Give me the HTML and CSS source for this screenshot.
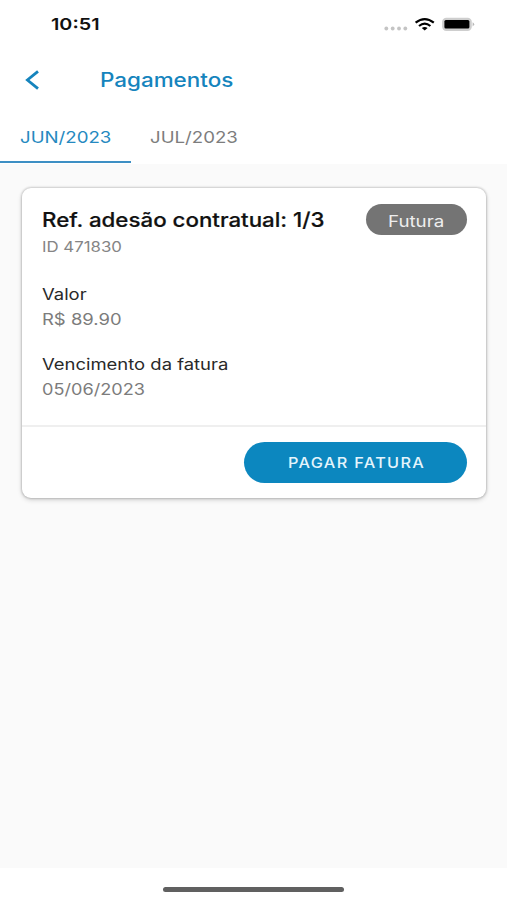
FILE: index.html
```html
<!DOCTYPE html>
<html lang="pt-BR">
<head>
<meta charset="utf-8">
<title>Pagamentos</title>
<link rel="stylesheet" href="styles.css">
</head>
<body>
<div class="screen">
  <div class="status">
    <span class="wide time">10:51</span>
    <svg class="status-icons" width="92" height="16" viewBox="0 0 92 16">
      <g fill="#c4c4c4"><circle cx="3.3" cy="12.5" r="1.9"/><circle cx="9.7" cy="12.5" r="1.9"/><circle cx="16" cy="12.5" r="1.9"/><circle cx="22.3" cy="12.5" r="1.9"/></g>
      <g fill="none" stroke="#000" stroke-width="2.2"><path d="M32.6 6.7Q41.7-.5 50.8 6.7"/><path d="M36 10Q41.7 5.4 47.4 10"/></g>
      <path d="M38.8 12Q41.7 9.8 44.6 12L41.7 14.4Z"/>
      <rect x="59.1" y="1.7" width="29.7" height="13.2" rx="4.2" fill="#cecece"/>
      <rect x="61.4" y="4.1" width="25" height="8.4" rx="1.5"/>
      <path d="M89.6 6.2Q92.8 8.2 89.6 10.4Z" fill="#b8b8b8"/>
    </svg>
  </div>
  <header class="appbar">
    <svg class="back" width="16" height="22" viewBox="0 0 16 22"><path d="M14 2.3L3.4 11l10.6 8.7" fill="none" stroke="#1584bd" stroke-width="2.8"/></svg>
    <h1 class="wide">Pagamentos</h1>
  </header>
  <nav class="tabs">
    <div class="tab active"><span class="wide">JUN/2023</span></div>
    <div class="tab"><span class="wide">JUL/2023</span></div>
  </nav>
  <main>
    <section class="card">
      <div class="details">
        <div class="heading">
          <h2 class="wide">Ref. adesão contratual: 1/3</h2>
          <span class="badge"><span class="wide">Futura</span></span>
        </div>
        <p class="wide id">ID 471830</p>
        <p class="wide label">Valor</p>
        <p class="wide value">R$ 89.90</p>
        <p class="wide label due">Vencimento da fatura</p>
        <p class="wide value date">05/06/2023</p>
      </div>
      <div class="actions"><button type="button"><span class="wide">PAGAR FATURA</span></button></div>
    </section>
  </main>
  <footer><div class="home"></div></footer>
</div>
</body>
</html>
```
FILE: styles.css
```css
* { box-sizing: border-box; margin: 0; padding: 0; }
body { background: #fff; font-family: Inter, "Liberation Sans", sans-serif; color: #222; }
.screen { width: 507px; height: 900px; display: flex; flex-direction: column; overflow: hidden; }
.wide { display: inline-block; transform: scaleX(1.2); transform-origin: left center; white-space: nowrap; }
.status { height: 48px; display: flex; justify-content: space-between; padding: 16px 32px 0 50.5px; }
.time { font-size: 16.5px; font-weight: 600; line-height: 17px; color: #111; }
.appbar { height: 64px; display: flex; align-items: center; padding-left: 24px; }
.back { flex: none; }
h1 { margin-left: 60px; font-size: 19.5px; font-weight: 500; line-height: 24px; color: #1584bd; }
h1.wide { transform: scaleX(1.15); }
.tabs { height: 52px; display: flex; }
.tab { width: 131px; height: 51px; padding-left: 19px; font-size: 16px; line-height: 51px; color: #7d7d7d; }
.tab.active { padding-left: 20px; }
.tab .wide { transform: scaleX(1.165); }
.active { color: #2589c0; border-bottom: 2px solid #3d8fc4; }
main { flex: 1; background: #fafafa; padding: 24px 21px 0 22px; }
.card { height: 310px; border-radius: 9px; background: #fff; box-shadow: 0 0 2px 1px rgba(0,0,0,.16), 0 2px 5px rgba(0,0,0,.16); }
.details { height: 239px; padding: 16px 19px 0 19.5px; border-bottom: 2px solid #efefef; }
.heading { height: 32px; display: flex; justify-content: space-between; }
h2 { font-size: 20px; font-weight: 500; line-height: 32px; color: #111; -webkit-text-stroke: .2px #111; }
h2.wide { transform: scaleX(1.115); }
.badge { width: 101px; height: 31px; border-radius: 16px; background: #747474; color: #eee; font-size: 16px; line-height: 34px; padding-left: 22px; }
.badge .wide { transform: scaleX(1.17); }
p { line-height: 25px; font-size: 15.5px; }
.details p { display: block; }
.id { color: #858585; font-size: 14px; line-height: 22px; }
.label { color: #292929; margin-top: 24px; }
.details .label, .details .value { transform: scaleX(1.19); }
.details .date { transform: scaleX(1.17); }
.due { margin-top: 20px; }
.value { color: #7c7c7c; }
.actions { display: flex; justify-content: flex-end; padding: 15px 19px; }
button { width: 223px; height: 41px; border: 0; border-radius: 21px; background: #0c87bf; color: #e5f5fc; text-align: left; padding-left: 43.5px; font: 500 14.5px/39px Inter, sans-serif; letter-spacing: 1.2px; }
button .wide { transform: scaleX(1.12); }
footer { height: 32px; padding-top: 19px; display: flex; justify-content: center; }
.home { width: 181px; height: 5px; border-radius: 3px; background: #606060; }
```
